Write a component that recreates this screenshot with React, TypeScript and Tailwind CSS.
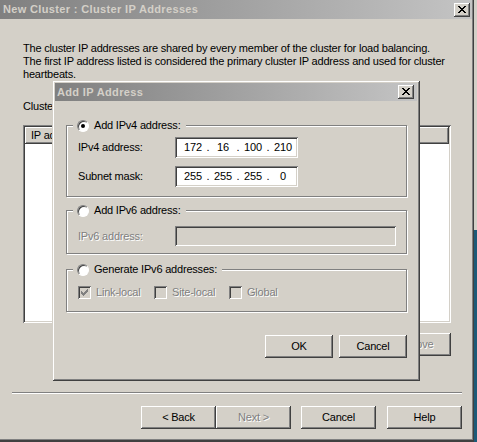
import React from 'react'

// classic 3D bevels
const raised =
    'bg-[#d4d0c8] shadow-[inset_-1px_-1px_#404040,inset_1px_1px_#ffffff,inset_-2px_-2px_#808080]'
const sunken =
    'shadow-[inset_1px_1px_#808080,inset_-1px_-1px_#ffffff,inset_2px_2px_#404040,inset_-2px_-2px_#d4d0c8]'
const frame =
    'bg-[#d4d0c8] shadow-[inset_1px_1px_#d4d0c8,inset_-1px_-1px_#404040,inset_2px_2px_#ffffff,inset_-2px_-2px_#808080]'
const etched = 'border border-[#808080] shadow-[1px_1px_0_#ffffff,inset_1px_1px_0_#ffffff]'
const disabledText = 'text-[#808080] [text-shadow:1px_1px_0_#ffffff]'

function CloseGlyph() {
    const px = [
        [0, 0], [1, 0], [6, 0], [7, 0],
        [1, 1], [2, 1], [5, 1], [6, 1],
        [2, 2], [3, 2], [4, 2], [5, 2],
        [3, 3], [4, 3],
        [2, 4], [3, 4], [4, 4], [5, 4],
        [1, 5], [2, 5], [5, 5], [6, 5],
        [0, 6], [1, 6], [6, 6], [7, 6],
    ]
    return (
        <svg width="8" height="7" viewBox="0 0 8 7" shapeRendering="crispEdges">
            {px.map(([x, y]) => (
                <rect key={`${x}-${y}`} x={x} y={y} width="1" height="1" fill="#000" />
            ))}
        </svg>
    )
}

function CloseButton() {
    return (
        <div className={`flex h-[14px] w-[16px] items-center justify-center pb-[1px] ${raised}`}>
            <CloseGlyph />
        </div>
    )
}

function TitleBar({ title, className }: { title: string; className: string }) {
    return (
        <div className={`flex items-center justify-between bg-linear-to-r from-[#808080] to-[#c4c4c4] ${className}`}>
            <span className="font-bold tracking-[0.35px] text-[#d4d0c8]">{title}</span>
            <CloseButton />
        </div>
    )
}

function Button({ label, width, disabled }: { label: string; width: string; disabled?: boolean }) {
    return (
        <div className={`flex h-[23px] items-center justify-center ${width} ${raised} ${disabled ? disabledText : ''}`}>
            {label}
        </div>
    )
}

function Radio({ checked }: { checked?: boolean }) {
    return (
        <span className="flex h-[12px] w-[12px] items-center justify-center rounded-full border border-t-[#808080] border-l-[#808080] border-r-white border-b-white bg-white shadow-[inset_1px_1px_0_#404040]">
            {checked && <span className="h-[4px] w-[4px] rounded-full bg-black" />}
        </span>
    )
}

function Check({ checked, label, width }: { checked?: boolean; label: string; width: string }) {
    return (
        <div className={`flex items-center ${width}`}>
            <span className={`flex h-[13px] w-[13px] items-center justify-center bg-[#d4d0c8] ${sunken}`}>
                {checked && (
                    <svg width="7" height="7" viewBox="0 0 7 7" shapeRendering="crispEdges">
                        <path d="M0 2h1v1h1v1h1v-1h1v-1h1v-1h1v-1h1v3h-1v1h-1v1h-1v1h-1v1h-1v-1h-1v-1h-1z" fill="#808080" />
                    </svg>
                )}
            </span>
            <span className={`ml-[5px] ${disabledText}`}>{label}</span>
        </div>
    )
}

function Group({ label, checked, height, children, className }: {
    label: string
    checked?: boolean
    height: string
    children: React.ReactNode
    className?: string
}) {
    return (
        <div className={`relative w-[341px] ${height} ${etched} ${className ?? ''}`}>
            <div className="absolute left-[6px] top-[-7px] flex h-[13px] items-center bg-[#d4d0c8] pl-[4px] pr-[5px]">
                <Radio checked={checked} />
                <span className="ml-[5px]">{label}</span>
            </div>
            {children}
        </div>
    )
}

function IpField({ parts }: { parts: string[] }) {
    return (
        <div className={`flex h-[21px] w-[123px] items-center bg-white pl-[5px] ${sunken}`}>
            {parts.map((p, i) => (
                <React.Fragment key={i}>
                    {i > 0 && <span className="w-[4px] text-center">.</span>}
                    <span className="w-[26px] text-center">{p}</span>
                </React.Fragment>
            ))}
        </div>
    )
}

function AddIpDialog() {
    return (
        <div className={`absolute left-[52px] top-[80px] flex h-[301px] w-[368px] flex-col p-[3px] ${frame}`}>
            <TitleBar title="Add IP Address" className="h-[18px] pl-[2px] pr-[3px]" />
            <div className="flex flex-col pl-[11px]">
                <Group label="Add IPv4 address:" checked height="h-[72px]" className="mt-[24px] pt-[11px]">
                    <div className="flex items-center pl-[11px]">
                        <span className="w-[97px]">IPv4 address:</span>
                        <IpField parts={['172', '16', '100', '210']} />
                    </div>
                    <div className="mt-[8px] flex items-center pl-[11px]">
                        <span className="w-[97px]">Subnet mask:</span>
                        <IpField parts={['255', '255', '255', '0']} />
                    </div>
                </Group>
                <Group label="Add IPv6 address:" height="h-[44px]" className="mt-[13px] pt-[15px]">
                    <div className="flex items-center pl-[11px]">
                        <span className={`w-[97px] ${disabledText}`}>IPv6 address:</span>
                        <div className={`h-[20px] w-[221px] bg-[#d4d0c8] ${sunken}`} />
                    </div>
                </Group>
                <Group label="Generate IPv6 addresses:" height="h-[43px]" className="mt-[15px] pt-[16px]">
                    <div className="flex items-center pl-[11px]">
                        <Check checked label="Link-local" width="w-[76px]" />
                        <Check label="Site-local" width="w-[75px]" />
                        <Check label="Global" width="w-[75px]" />
                    </div>
                </Group>
                <div className="mt-[23px] flex w-[341px] justify-end gap-[6px]">
                    <Button label="OK" width="w-[68px]" />
                    <Button label="Cancel" width="w-[68px]" />
                </div>
            </div>
        </div>
    )
}

export default function App() {
    return (
        <div className="flex h-[442px] w-[477px] overflow-hidden bg-[#d4d0c8] font-['Liberation_Sans','DejaVu_Sans',sans-serif] text-[11px] leading-[13px] tracking-[-0.2px] text-black">
            <div className="relative flex h-[442px] w-[474px] flex-col pr-[2px] shadow-[inset_-1px_-2px_#404040,inset_-2px_-3px_#808080]">
                <TitleBar title="New Cluster :  Cluster IP Addresses" className="h-[19px] pl-[3px] pr-[2px]" />

                <div className="flex flex-col">
                    <p className="ml-[23px] mt-[23px] w-[430px]">
                        The cluster IP addresses are shared by every member of the cluster for load balancing.
                        <br />
                        The first IP address listed is considered the primary cluster IP address and used for cluster heartbeats.
                    </p>

                    <p className="ml-[23px] mt-[19px]">Cluster IP addresses:</p>

                    <div className={`ml-[23px] mt-[12px] flex h-[198px] w-[428px] flex-col bg-white p-[2px] ${sunken}`}>
                        <div className="flex">
                            <div className={`flex h-[17px] w-[120px] items-center pl-[6px] ${raised}`}>IP address</div>
                            <div className={`flex h-[17px] flex-1 items-center pl-[6px] ${raised}`}>Subnet mask</div>
                        </div>
                    </div>

                    <div className="mt-[10px] flex w-[451px] justify-end gap-[5px]">
                        <Button label="Add..." width="w-[75px]" />
                        <Button label="Edit..." width="w-[75px]" disabled />
                        <Button label="Remove" width="w-[75px]" disabled />
                    </div>

                    <div className="ml-[12px] mt-[36px] h-[2px] w-[450px] border-t border-b border-t-[#808080] border-b-white" />

                    <div className="mt-[12px] flex pl-[141px]">
                        <Button label="< Back" width="w-[75px]" />
                        <Button label="Next >" width="w-[75px]" disabled />
                        <div className="ml-[10px]">
                            <Button label="Cancel" width="w-[75px]" />
                        </div>
                        <div className="ml-[11px]">
                            <Button label="Help" width="w-[75px]" />
                        </div>
                    </div>
                </div>

                <AddIpDialog />
            </div>

            {/* desktop peeking past the window edge */}
            <div className="flex w-[3px] flex-col">
                <div className="h-[230px] bg-[#d4d0c8]" />
                <div className="flex-1 bg-[#1d5a78]" />
            </div>
        </div>
    )
}
